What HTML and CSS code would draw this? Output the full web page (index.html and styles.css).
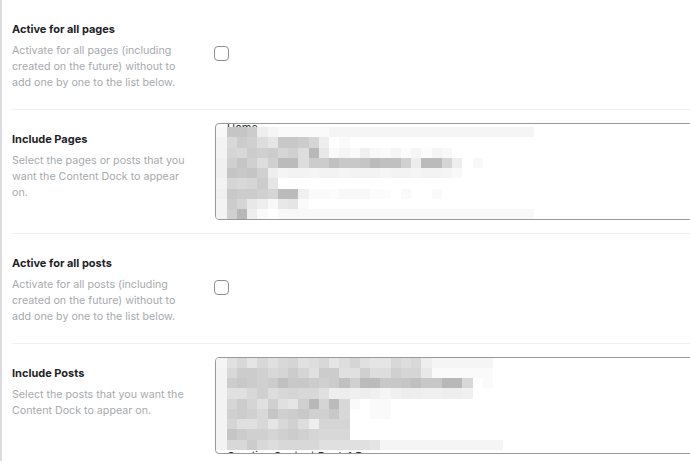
FILE: index.html
```html
<!DOCTYPE html>
<html lang="en">
<head>
<meta charset="utf-8">
<title>Content Dock settings</title>
<link rel="stylesheet" href="styles.css">
</head>
<body>
<div class="page">
  <div class="row">
    <div class="label">
      <h3 class="title">Active for all pages</h3>
      <p class="desc">Activate for all pages (including created on the future) without to add one by one to the list below.</p>
    </div>
    <div class="field">
      <span class="check" role="checkbox" aria-checked="false"></span>
    </div>
  </div>
  <div class="row">
    <div class="label">
      <h3 class="title">Include Pages</h3>
      <p class="desc">Select the pages or posts that you want the Content Dock to appear on.</p>
    </div>
    <div class="field">
      <div class="box">
        <div class="opts opts-pages"><div class="opt">Home</div></div>
        <div class="mosaic" data-set="pages"></div>
      </div>
    </div>
  </div>
  <div class="row">
    <div class="label">
      <h3 class="title">Active for all posts</h3>
      <p class="desc">Activate for all posts (including created on the future) without to add one by one to the list below.</p>
    </div>
    <div class="field">
      <span class="check" role="checkbox" aria-checked="false"></span>
    </div>
  </div>
  <div class="row">
    <div class="label">
      <h3 class="title">Include Posts</h3>
      <p class="desc">Select the posts that you want the Content Dock to appear on.</p>
    </div>
    <div class="field">
      <div class="box">
        <div class="opts opts-posts"><div class="opt">Creative Content Dock 1 Demo</div></div>
        <div class="mosaic mosaic-posts" data-set="posts"></div>
      </div>
    </div>
  </div>
</div>
<script src="mosaic.js"></script>
</body>
</html>
```

FILE: styles.css
```css
html, body {
  margin: 0;
  padding: 0;
  background: #ffffff;
  overflow: hidden;
}

body {
  font-family: Inter, "Liberation Sans", Arial, sans-serif;
  -webkit-font-smoothing: antialiased;
}

.page {
  border-left: 2px solid #dcdcde;
  min-height: 461px;
  padding-left: 10px;
}

.row {
  display: grid;
  grid-template-columns: 203px 1fr;
  border-bottom: 1px solid #f0f0f1;
}

.label {
  padding: 21px 18px 18px 0;
}

.title {
  margin: 0 0 6px;
  font-size: 11px;
  line-height: 16px;
  font-weight: 700;
  color: #1d2327;
}

.desc {
  margin: 0;
  font-size: 10.7px;
  line-height: 16px;
  color: #a7aaad;
}

.field {
  padding: 13px 0;
  min-width: 0;
}

.check {
  display: block;
  width: 15px;
  height: 15px;
  box-sizing: border-box;
  margin: 33px 0 0 -1px;
  border: 1px solid #8c8f94;
  border-radius: 4px;
  background: #fff;
}

.box {
  position: relative;
  width: 540px;
  height: 97px;
  box-sizing: border-box;
  border: 1px solid #999a9c;
  border-radius: 4px;
  overflow: hidden;
  background: #fff;
}

.opts {
  padding-left: 11px;
  font-size: 11px;
  line-height: 16px;
  color: #2c3338;
}

.opts-pages {
  margin-top: -4px;
}

.opts-posts {
  padding-top: 90px;
}

.mosaic {
  position: absolute;
  top: 3px;
  left: 0.45px;
  display: flex;
  flex-direction: column;
}

.mosaic-posts {
  top: -0.5px;
}

.mrow {
  display: flex;
  height: 10.25px;
}

.cell {
  flex: none;
  width: 10.25px;
  height: 10.25px;
}
```

FILE: mosaic.js
```js
var MOSAIC = {
  pages: [
    "f8 c5 c5 cc ee f5 fa fa fa fa fa f5 f5 f5 f5 f5 f5 f5 f5 f5 f5 f5 f5 f5 f5 f5 f5 f5 f5 f5 f5",
    "f3 d8 cc d0 dd e5 c8 c8 cc d5 ee ff fa ff ff ff ff ff ff ff ff ff ff ff ff ff ff ff ff ff ff",
    "f3 d5 d8 cc d0 cc d5 d0 dd b8 e8 fa f5 fa f0 f8 fa f5 fc f5 fc f5 f8 ff ff ff ff ff ff ff ff",
    "f0 d0 c5 d0 dd d0 bb bb dd cc cc c0 c8 c8 c5 bb c0 c0 d0 ed bb bb d5 ee ff f8 ff ff ff ff ff",
    "f0 c5 c8 c5 d0 ee f5 f3 f3 f5 f3 f3 f5 f3 f3 f3 f5 f3 f3 f5 f3 f3 f5 f8 ff ff ff ff ff ff ff",
    "f3 d5 d8 d5 cc e5 ff ff ff ff ff ff ff ff ff ff ff ff ff ff ff ff ff ff ff ff ff ff ff ff ff",
    "f0 c8 cc cc d0 d5 bb bb f0 fa fa fc f8 f8 f8 fc fc ff fa ff ff fa ff ff ff ff ff ff ff ff ff",
    "f3 cc d5 e8 ee f8 e8 e5 fa ff ff ff ff ff ff ff ff ff ff ff ff ff ff ff ff ff ff ff ff ff ff",
    "f3 d0 b8 ee fa ff f8 f8 f8 f8 f8 f8 f8 f8 f8 f8 f8 f8 f8 f8 f8 f8 f8 f8 f8 f8 f8 f8 f8 f8 f8"
  ],
  posts: [
    "f5 e0 d8 e5 d8 e0 d8 d5 e0 dd d8 e5 dd d5 e0 e5 e5 d8 dd d8 ee f5 f5 f5 f5 f5 f5",
    "f3 d8 cc cc d0 d8 d5 cc d5 e0 cc cc e0 e0 d0 dd dd d0 d5 d5 e8 fa fa fa fa fa fa",
    "f3 cc c8 cc d0 cc c0 c8 c8 cc d0 cc c0 d0 bb bb c8 c8 c5 c0 c8 c8 b8 b8 d8 ff fa",
    "f3 e0 e0 d8 d0 dd d8 d5 d8 d8 e0 ee ed f0 ee f0 f5 f0 ed ee f0 f0 ee ee f0 ff ff",
    "f3 d5 cc d5 e0 d0 e0 e5 d0 b8 d5 bb d8 fa ff fa fa ff",
    "f3 d0 cc d0 d8 c5 d0 cc c8 d0 d0 c8 d8 ff ff fa fa",
    "f3 d5 e0 e0 d8 e5 d8 d0 dd ee d5 d5 d5 ff",
    "f3 c5 cc d0 d0 d5 d0 cc d0 d5 d8 d8 d8 ff",
    "f3 d8 d8 cc d8 dd d8 d8 d8 d8 e0 e0 e0 e0 e0 e5 f5 f5 f5 f5 f5 f5 f5 f5 f5 f5 f5 f5"
  ]
};

document.querySelectorAll(".mosaic").forEach(function (m) {
  var rows = MOSAIC[m.getAttribute("data-set")] || [];
  rows.forEach(function (r) {
    var row = document.createElement("div");
    row.className = "mrow";
    r.split(" ").forEach(function (h) {
      var c = document.createElement("span");
      c.className = "cell";
      c.style.background = "#" + h + h + h;
      row.appendChild(c);
    });
    m.appendChild(row);
  });
});
```
